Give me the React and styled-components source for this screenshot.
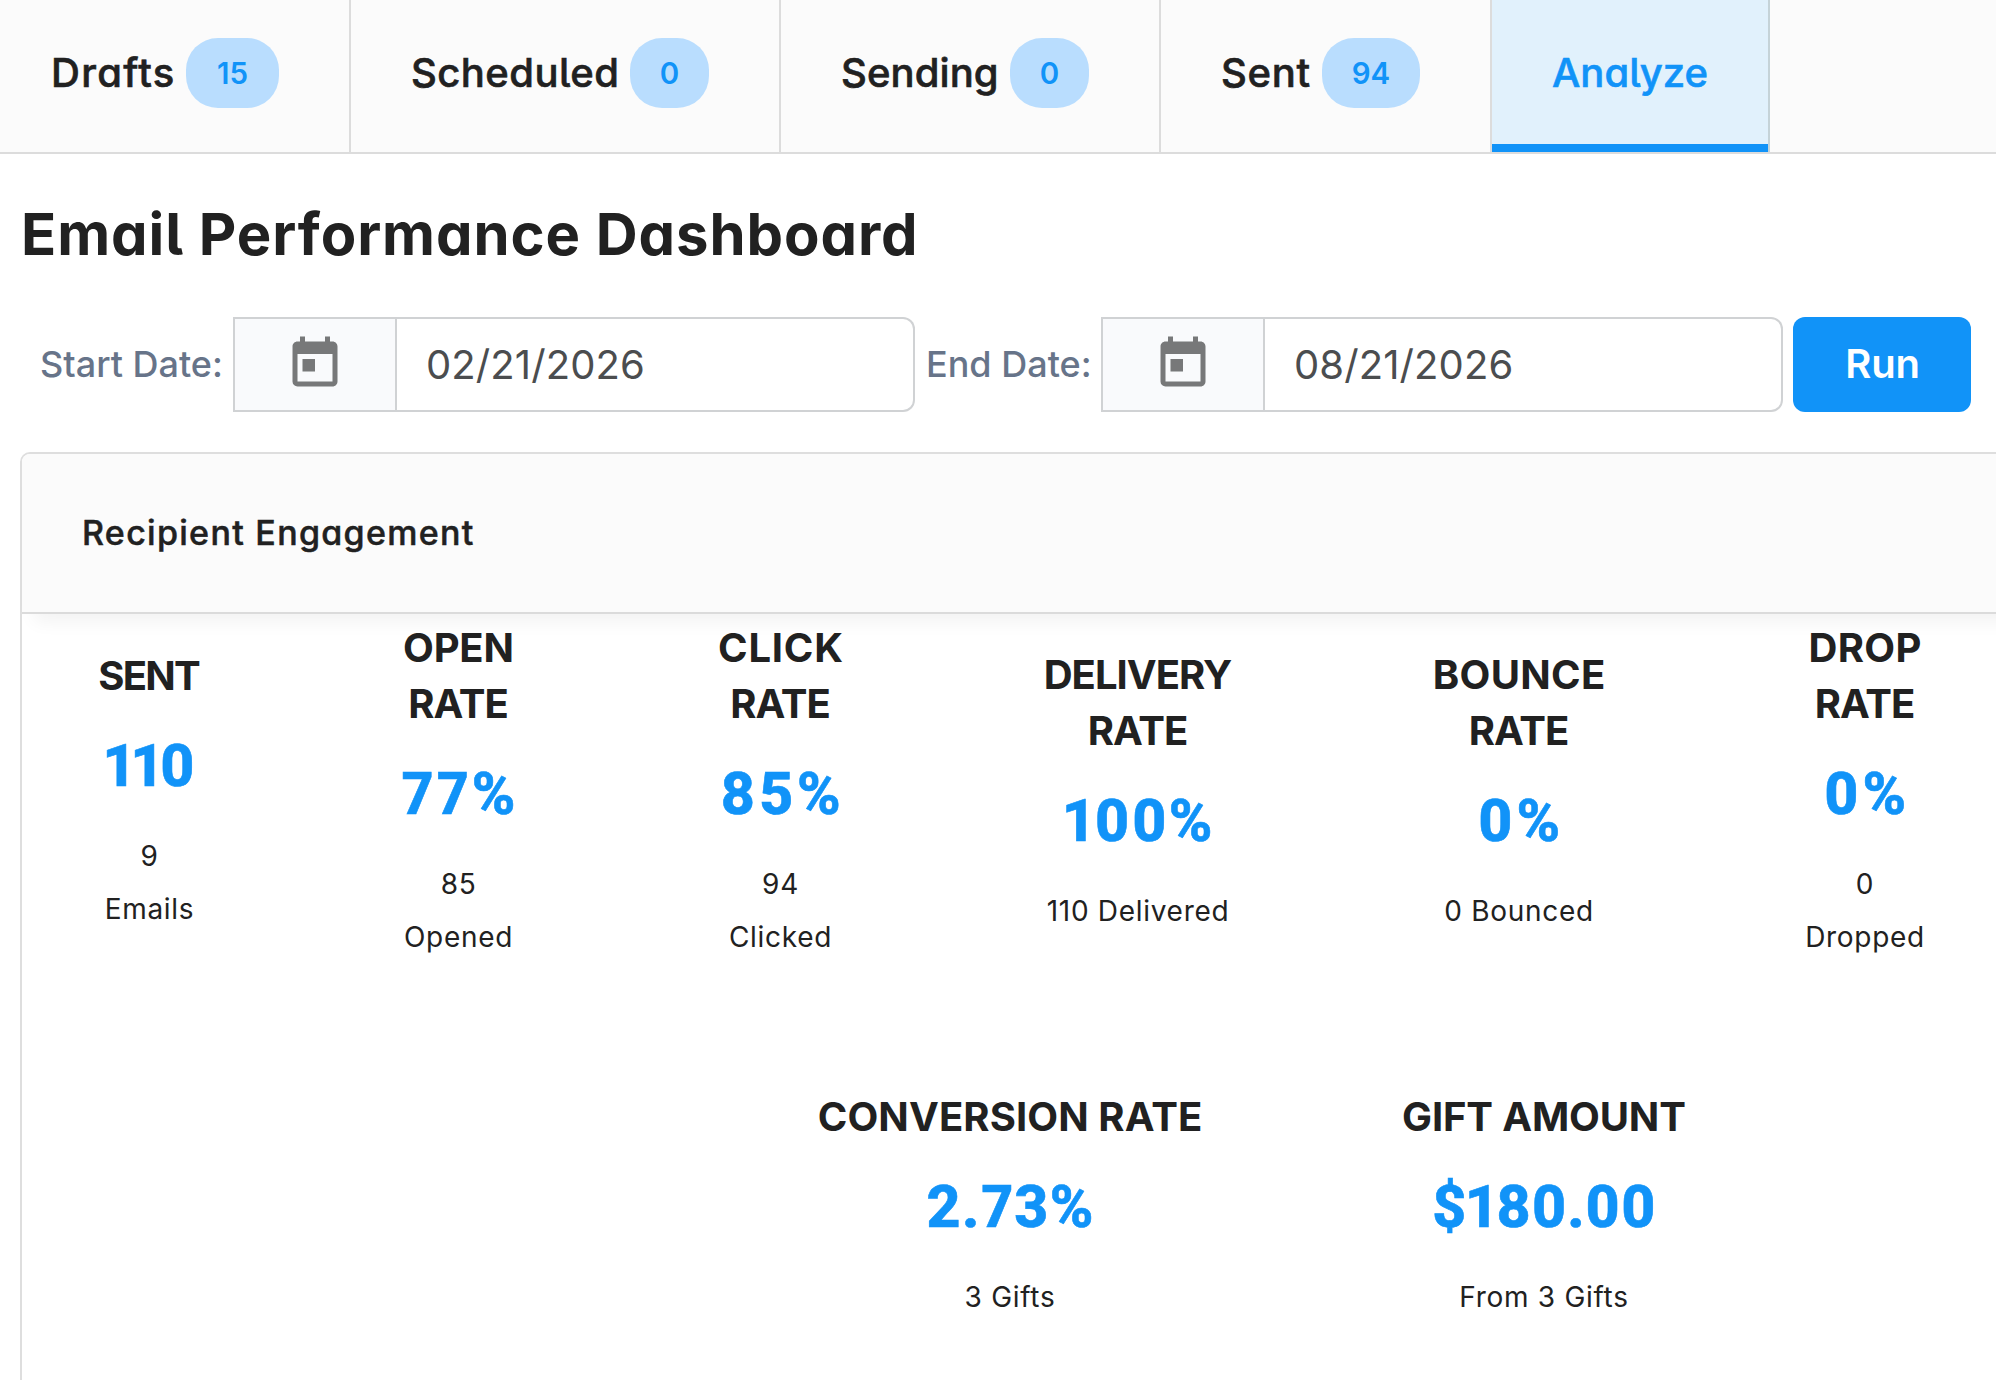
import React from 'react';
import styled, { createGlobalStyle } from 'styled-components';
import { MdToday } from 'react-icons/md';

const tabs = [
  { label: 'Drafts', count: 15, width: 351, pad: 51, badge: 93, spacing: 1.3 },
  { label: 'Scheduled', count: 0, width: 430, pad: 60, badge: 79, spacing: 0.45 },
  { label: 'Sending', count: 0, width: 380, pad: 60, badge: 79, spacing: 0.1 },
  { label: 'Sent', count: 94, width: 331, pad: 60, badge: 98, spacing: 0.7 },
  { label: 'Analyze', width: 278, pad: 60, spacing: 0, active: true },
];

const RATE = { text: 'RATE', spacing: -1 };

const engagement = [
  { title: [{ text: 'SENT', spacing: -1.8 }], value: '110', kern: -1.2, detail: ['9', 'Emails'] },
  { title: [{ text: 'OPEN', spacing: -0.2 }, RATE], value: '77%', kern: 3.7, detail: ['85', 'Opened'] },
  { title: [{ text: 'CLICK', spacing: 0.8 }, RATE], value: '85%', kern: 3.7, detail: ['94', 'Clicked'] },
  { title: [{ text: 'DELIVERY', spacing: -1 }, RATE], value: '100%', kern: 2, detail: ['110 Delivered'] },
  { title: [{ text: 'BOUNCE', spacing: 0.3 }, RATE], value: '0%', kern: 3.5, detail: ['0 Bounced'] },
  { title: [{ text: 'DROP', spacing: 0.3 }, RATE], value: '0%', kern: 3.5, detail: ['0', 'Dropped'] },
];

const conversions = [
  { title: [{ text: 'CONVERSION RATE', spacing: 0.1 }], value: '2.73%', kern: 1.6, detail: ['3 Gifts'] },
  { title: [{ text: 'GIFT AMOUNT', spacing: -0.15 }], value: '$180.00', kern: 0.4, detail: ['From 3 Gifts'] },
];

const DateField = ({ label, value, labelWidth }) => (
  <Field>
    <Label $width={labelWidth}>{label}</Label>
    <IconBox>
      <MdToday size={60} />
    </IconBox>
    <DateInput>{value}</DateInput>
  </Field>
);

const Stat = ({ title, value, kern, detail }) => (
  <StatCell>
    {title.map((line) => (
      <StatTitle key={line.text} $spacing={line.spacing}>{line.text}</StatTitle>
    ))}
    <StatValue $spacing={kern}>{value}</StatValue>
    {detail.map((line) => (
      <StatDetail key={line}>{line}</StatDetail>
    ))}
  </StatCell>
);

const App = () => {
  return (
    <Page>
      <GlobalStyle />
      <TabBar>
        {tabs.map((tab) => (
          <Tab key={tab.label} $width={tab.width} $pad={tab.pad} $active={tab.active}>
            <TabLabel $spacing={tab.spacing}>{tab.label}</TabLabel>
            {tab.count !== undefined && <Badge $width={tab.badge}>{tab.count}</Badge>}
          </Tab>
        ))}
      </TabBar>
      <Title>Email Performance Dashboard</Title>
      <Filters>
        <DateField label="Start Date:" value="02/21/2026" labelWidth={193} />
        <DateField label="End Date:" value="08/21/2026" labelWidth={175} />
        <RunButton>Run</RunButton>
      </Filters>
      <Card>
        <CardHeader>Recipient Engagement</CardHeader>
        <CardBody>
          <EngagementRow>
            {engagement.map((stat) => (
              <Stat key={stat.title[0].text} {...stat} />
            ))}
          </EngagementRow>
          <ConversionRow>
            {conversions.map((stat) => (
              <Stat key={stat.title[0].text} {...stat} />
            ))}
          </ConversionRow>
        </CardBody>
      </Card>
    </Page>
  );
};

export default App;

const GlobalStyle = createGlobalStyle`
  * {
    box-sizing: border-box;
  }

  body {
    margin: 0;
    background: #fff;
    overflow: hidden;
  }
`;

const Page = styled.div`
  width: 100%;
  height: 1380px;
  overflow: hidden;
  color: #212121;
  font-family: Inter, "Liberation Sans", sans-serif;
`;

const TabBar = styled.nav`
  display: flex;
  height: 154px;
  background: #fbfbfb;
  border-bottom: 2px solid #dcdcdc;
`;

const Tab = styled.div`
  display: flex;
  align-items: flex-start;
  justify-content: space-between;
  flex-shrink: 0;
  width: ${(p) => p.$width}px;
  padding: 38px ${(p) => (p.$active ? 50 : 70)}px 0 ${(p) => p.$pad}px;
  border-right: 2px solid ${(p) => (p.$active ? '#c5d3d8' : '#dcdcdc')};
  color: ${(p) => (p.$active ? '#1193f8' : '#212121')};
  background: ${(p) => (p.$active ? '#e1f1fc' : 'transparent')};
  box-shadow: ${(p) => (p.$active ? 'inset 0 -8px #1193f8' : 'none')};
`;

const TabLabel = styled.span`
  font-size: 40px;
  font-weight: 500;
  line-height: 70px;
  letter-spacing: ${(p) => p.$spacing}px;
  font-feature-settings: 'cv11', 'cv05';
  -webkit-text-stroke: 0.6px currentColor;
`;

const Badge = styled.span`
  flex-shrink: 0;
  width: ${(p) => p.$width}px;
  height: 70px;
  border-radius: 32px;
  background: #b9ddfe;
  color: #1193f8;
  font-size: 29.5px;
  font-weight: 600;
  line-height: 70px;
  text-align: center;
`;

const Title = styled.h1`
  margin: 45px 0 48px 21px;
  font-size: 58px;
  font-weight: 700;
  line-height: 70px;
  letter-spacing: 0.93px;
  font-feature-settings: 'cv11', 'cv05';
`;

const Filters = styled.div`
  display: flex;
  height: 95px;
  padding-left: 40px;
`;

const Field = styled.div`
  display: flex;
  align-items: center;
  margin-right: 11px;
`;

const Label = styled.label`
  width: ${(p) => p.$width}px;
  padding-bottom: 2px;
  color: #677489;
  font-size: 36px;
  font-weight: 500;
  white-space: nowrap;
`;

const IconBox = styled.div`
  display: flex;
  align-items: center;
  justify-content: center;
  width: 164px;
  height: 95px;
  padding-bottom: 2px;
  border: 2px solid #d0d2d4;
  background: #f9fafc;
  color: #777879;
`;

const DateInput = styled.div`
  width: 518px;
  height: 95px;
  padding-left: 29px;
  border: 2px solid #d0d2d4;
  border-left: none;
  border-radius: 0 12px 12px 0;
  color: #4b4d4f;
  font-size: 40px;
  line-height: 91px;
  letter-spacing: 0.1px;
`;

const RunButton = styled.button`
  width: 178px;
  height: 95px;
  margin-left: -1px;
  padding: 0 0 2px 1px;
  border: none;
  border-radius: 12px;
  background: #1193f8;
  color: #fff;
  font: 600 40px/93px Inter, sans-serif;
  letter-spacing: -0.2px;
`;

const Card = styled.section`
  width: 2040px;
  height: 1000px;
  margin: 40px 0 0 20px;
  border: 2px solid #dedede;
  border-radius: 10px;
`;

const CardHeader = styled.header`
  height: 160px;
  padding-left: 60px;
  border-bottom: 2px solid #dbdbdb;
  border-radius: 8px 8px 0 0;
  background: #fbfbfb;
  box-shadow: 8px 12px 18px -4px rgba(0, 0, 0, 0.05);
  font-size: 34px;
  font-weight: 500;
  line-height: 158px;
  letter-spacing: 1.3px;
  font-feature-settings: 'cv11', 'cv05';
  -webkit-text-stroke: 0.5px currentColor;
`;

const CardBody = styled.div`
  padding-top: 6px;
`;

const EngagementRow = styled.div`
  display: grid;
  grid-template-columns: 255px 363px 281px 434px 328px 364px;
  align-items: center;
`;

const ConversionRow = styled.div`
  display: grid;
  grid-template-columns: 534px 534px;
  margin: 125px 0 0 721px;
`;

const StatCell = styled.div`
  text-align: center;
`;

const StatTitle = styled.div`
  font-size: 40px;
  font-weight: 700;
  line-height: 56px;
  letter-spacing: ${(p) => p.$spacing}px;
  text-indent: ${(p) => p.$spacing}px;
`;

const StatValue = styled.div`
  margin: 21px 0 23px;
  color: #1193f8;
  font-family: Roboto, sans-serif;
  font-size: 59px;
  font-weight: 800;
  line-height: 82px;
  letter-spacing: ${(p) => p.$spacing}px;
  text-indent: ${(p) => p.$spacing}px;
  font-feature-settings: 'pnum';
  -webkit-text-stroke: 0.6px currentColor;
`;

const StatDetail = styled.div`
  font-size: 28px;
  line-height: 53px;
  letter-spacing: 0.7px;
`;
